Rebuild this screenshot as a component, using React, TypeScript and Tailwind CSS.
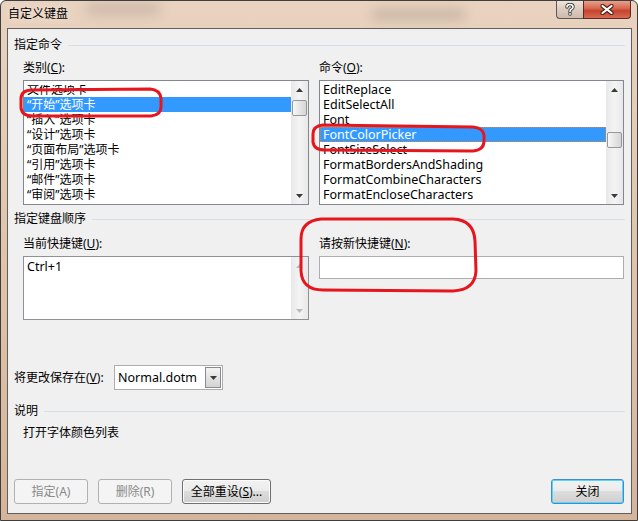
import React, {ReactNode} from 'react';

type ArrowProps = {
    up?: boolean;
    disabled?: boolean;
};

const Arrow = ({up = false, disabled = false}: ArrowProps) => (
    <svg width="7" height="4" viewBox="0 0 7 4">
        <path d={up ? 'M0 4 L3.5 0 L7 4 Z' : 'M0 0 L3.5 4 L7 0 Z'} fill={disabled ? '#bcbcbc' : '#3a3a3a'}/>
    </svg>
);

type ScrollBarProps = {
    thumbClass?: string;
    disabled?: boolean;
};

const ScrollBar = ({thumbClass, disabled = false}: ScrollBarProps) => (
    <div className="flex w-[17px] flex-col bg-gradient-to-r from-[#e8e8e8] via-[#f4f4f4] to-[#e8e8e8]">
        <div className="flex h-[17px] items-center justify-center">
            <Arrow up disabled={disabled}/>
        </div>
        <div className="flex-1">
            {thumbClass ?
                <div className={`${thumbClass} mx-auto h-[16px] w-[15px] rounded-[2px] border border-[#979797] bg-gradient-to-r from-[#f8f8f8] to-[#d5d5d5]`}/> : <></>
            }
        </div>
        <div className="flex h-[17px] items-center justify-center">
            <Arrow disabled={disabled}/>
        </div>
    </div>
);

type ListBoxProps = {
    items: string[];
    selected: number;
    focus?: boolean;
    clipFirst?: boolean;
    thumbClass: string;
    textClass: string;
};

const ListBox = ({items, selected, focus = false, clipFirst = false, thumbClass, textClass}: ListBoxProps) => (
    <div className="flex h-[125px] border border-[#828790] bg-white">
        <div className={`flex-1 overflow-hidden pt-px ${textClass}`}>
            {items.map((item, index) => {
                if (index === selected) {
                    return focus ?
                        <div key={index} className="h-[15px] border border-dotted border-[#d8843a] bg-[#3399ff] pl-[2px] leading-[13px] text-white">{item}</div> :
                        <div key={index} className="h-[15px] bg-[#3399ff] pl-[3px] leading-[15px] text-white">{item}</div>;
                }
                if (index === 0 && clipFirst) {
                    return (
                        <div key={index} className="flex h-[15px] flex-col justify-end pl-[3px]">
                            <div className="flex h-[12px] flex-col justify-end overflow-hidden">
                                <span className="block leading-[15px]">{item}</span>
                            </div>
                        </div>
                    );
                }
                return <div key={index} className="h-[15px] pl-[3px] leading-[15px]">{item}</div>;
            })}
        </div>
        <ScrollBar thumbClass={thumbClass}/>
    </div>
);

const GroupHeader = ({title, className}: {title: string; className: string}) => (
    <div className={`flex h-[14px] items-center ${className}`}>
        <span className="leading-[14px]">{title}</span>
        <div className="ml-[6px] h-px flex-1 bg-[#d5dfe5]"/>
    </div>
);

const Label = ({children}: {children: ReactNode}) => (
    <div className="h-[14px] leading-[14px]">{children}</div>
);

type ButtonProps = {
    children: ReactNode;
    width: string;
    kind?: 'normal' | 'disabled' | 'default';
};

const Button = ({children, width, kind = 'normal'}: ButtonProps) => {
    if (kind === 'disabled') {
        return (
            <div className={`${width} flex h-[25px] items-center justify-center rounded-[3px] border border-[#adb2b5] bg-[#f4f4f4] text-[#8a8a8a]`}>
                {children}
            </div>
        );
    }
    const border = kind === 'default' ? 'border-[#3c8fc8] shadow-[inset_0_0_0_1px_#56d6fa]' : 'border-[#707070] shadow-[inset_0_0_0_1px_#fcfcfc]';
    return (
        <div className={`${width} ${border} flex h-[25px] items-center justify-center rounded-[3px] border bg-[linear-gradient(#f2f2f2_0%,#ebebeb_50%,#dddddd_50%,#cfcfcf_100%)]`}>
            {children}
        </div>
    );
};

const HelpGlyph = () => (
    <svg width="10" height="13" viewBox="0 0 10 13">
        <path d="M2 4 Q2 1.5 5 1.5 Q8 1.5 8 4 Q8 5.5 6 6.5 Q5 7 5 8.5" fill="none" stroke="#3b3b3b" strokeWidth="3.4" strokeLinecap="round"/>
        <circle cx="5" cy="11" r="1.8" fill="#3b3b3b"/>
        <path d="M2 4 Q2 1.5 5 1.5 Q8 1.5 8 4 Q8 5.5 6 6.5 Q5 7 5 8.5" fill="none" stroke="#ffffff" strokeWidth="1.6" strokeLinecap="round"/>
        <circle cx="5" cy="11" r="0.9" fill="#ffffff"/>
    </svg>
);

const CloseGlyph = () => (
    <svg width="14" height="11" viewBox="0 0 14 11">
        <path d="M2.5 2 L11.5 9 M11.5 2 L2.5 9" stroke="#4a2218" strokeWidth="4.2" strokeLinecap="round"/>
        <path d="M2.5 2 L11.5 9 M11.5 2 L2.5 9" stroke="#ffffff" strokeWidth="2.2" strokeLinecap="round"/>
    </svg>
);

const Annotations = () => (
    <svg className="pointer-events-none absolute inset-0" width="638" height="521" viewBox="0 0 638 521">
        <g fill="none" stroke="#e6161f" strokeWidth="3" strokeLinejoin="round">
            <path d="M31 89 Q20 89 20 98 L20 107 Q21 115 32 115 L150 115 Q160 114 160 106 L160 97 Q159 89 149 88 Z"/>
            <path d="M322 124 Q312 125 312 133 L312 141 Q313 149 324 149 L472 150 Q483 149 483 140 L483 134 Q482 127 472 126 Z"/>
            <path d="M320 218 Q300 220 300 238 L300 270 Q301 289 322 289 L452 290 Q474 289 475 270 L474 240 Q473 219 452 218 Z"/>
        </g>
    </svg>
);

const leftItems = [
    '文件选项卡',
    '“开始”选项卡',
    '“插入”选项卡',
    '“设计”选项卡',
    '“页面布局”选项卡',
    '“引用”选项卡',
    '“邮件”选项卡',
    '“审阅”选项卡',
];

const rightItems = [
    'EditReplace',
    'EditSelectAll',
    'Font',
    'FontColorPicker',
    'FontSizeSelect',
    'FormatBordersAndShading',
    'FormatCombineCharacters',
    'FormatEncloseCharacters',
];

export default function App() {
    return (
        <div className="relative h-[521px] w-[638px] overflow-hidden rounded-t-[6px] border border-[#3e3e3e] bg-gradient-to-b from-[#e9d3c0] via-[#dfc4ab] to-[#d4b59b] font-['Noto_Sans','Noto_Sans_CJK_SC',sans-serif] text-[12px] text-black">
            {/* title bar */}
            <div className="relative flex h-[27px] items-start">
                <div className="absolute left-[84px] top-[1px] h-[14px] w-[76px] rounded-full bg-[#9a8a7f] opacity-30 blur-[6px]"/>
                <div className="absolute left-[370px] top-[7px] h-[13px] w-[95px] rounded-full bg-[#8d7f75] opacity-30 blur-[6px]"/>
                <span className="relative ml-[7px] mt-[6px] leading-[14px] [text-shadow:0_0_6px_#f6ece4]">自定义键盘</span>
                <div className="relative ml-auto mr-[6px] -mt-px flex">
                    <div className="flex h-[19px] w-[27px] items-center justify-center rounded-bl-[4px] border border-t-0 border-r-0 border-[#5e5650] bg-gradient-to-b from-[#f1e6dd] via-[#dcccbf] to-[#cdbbad]">
                        <HelpGlyph/>
                    </div>
                    <div className="flex h-[19px] w-[48px] items-center justify-center rounded-br-[4px] border border-t-0 border-[#5a2a20] bg-[linear-gradient(#eaa793_0%,#d86a52_45%,#c6432d_60%,#d96b55_100%)]">
                        <CloseGlyph/>
                    </div>
                </div>
            </div>

            {/* client area */}
            <div className="ml-[6px] flex h-[486px] w-[625px] flex-col border border-[#5f5f5f] bg-[#f0f0f0] px-[6px]">
                <GroupHeader title="指定命令" className="mt-[9px]"/>

                <div className="ml-[9px] mt-[9px] grid grid-cols-[286px_305px] gap-x-[10px]">
                    <Label>类别(<span className="underline">C</span>):</Label>
                    <Label>命令(<span className="underline">O</span>):</Label>
                    <div className="mt-[5px]">
                        <ListBox items={leftItems} selected={1} clipFirst thumbClass="mt-[2px]" textClass="text-[12px]"/>
                    </div>
                    <div className="mt-[5px]">
                        <ListBox items={rightItems} selected={3} focus thumbClass="mt-[34px]" textClass="text-[12.5px]"/>
                    </div>
                </div>

                <GroupHeader title="指定键盘顺序" className="mt-[7px]"/>

                <div className="ml-[9px] mt-[11px] grid grid-cols-[286px_305px] gap-x-[10px]">
                    <Label>当前快捷键(<span className="underline">U</span>):</Label>
                    <Label>请按新快捷键(<span className="underline">N</span>):</Label>
                    <div className="mt-[5px] flex h-[64px] border border-[#8e9196] bg-white">
                        <div className="flex-1 pl-[3px] pt-[2px] text-[12.5px] leading-[15px]">Ctrl+1</div>
                        <ScrollBar disabled/>
                    </div>
                    <div className="mt-[5px] h-[23px] border border-[#abadb3] bg-white"/>
                </div>

                <div className="mt-[45px] flex h-[25px] items-center">
                    <span className="w-[100px] leading-[14px]">将更改保存在(<span className="underline">V</span>):</span>
                    <div className="flex h-[25px] w-[109px] items-center border border-[#abadb3] bg-white">
                        <span className="flex-1 pl-[3px] text-[12.5px] leading-[16px]">Normal.dotm</span>
                        <div className="mr-px flex h-[21px] w-[16px] items-center justify-center border border-[#8b8b8b] bg-gradient-to-b from-[#f4f4f4] to-[#d3d3d3]">
                            <Arrow/>
                        </div>
                    </div>
                </div>

                <GroupHeader title="说明" className="mt-[14px]"/>

                <div className="ml-[9px] mt-[8px] h-[14px] leading-[14px]">打开字体颜色列表</div>

                <div className="mt-[39px] flex">
                    <Button width="w-[74px]" kind="disabled">指定(A)</Button>
                    <div className="ml-[10px]">
                        <Button width="w-[74px]" kind="disabled">删除(R)</Button>
                    </div>
                    <div className="ml-[10px]">
                        <Button width="w-[89px]">全部重设(<span className="underline">S</span>)...</Button>
                    </div>
                    <div className="ml-auto mr-px">
                        <Button width="w-[73px]" kind="default">关闭</Button>
                    </div>
                </div>
            </div>

            <Annotations/>
        </div>
    );
}
